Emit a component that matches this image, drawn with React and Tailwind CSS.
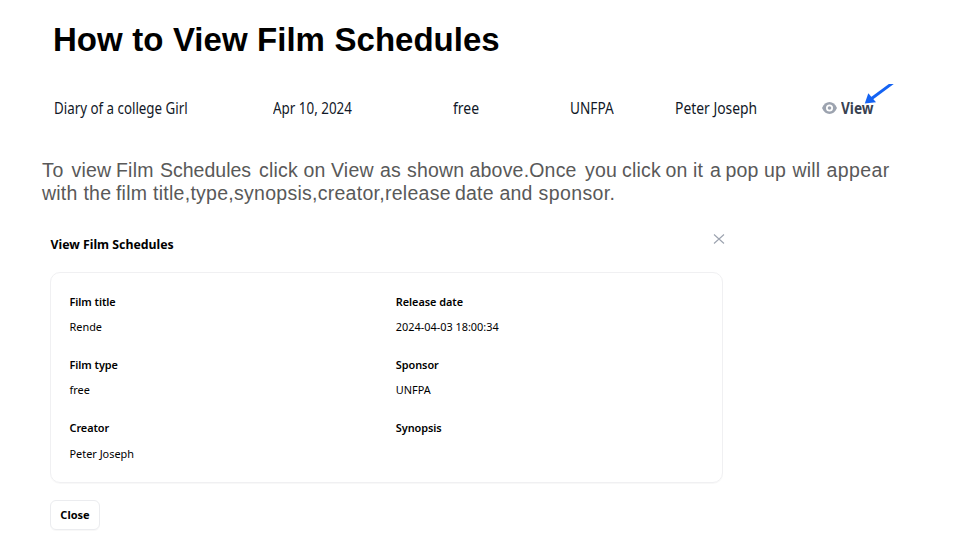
import React from "react";

const cell = "inline-block origin-left whitespace-nowrap";

function Field({ label, value }) {
  return (
    <div className="h-[63.4px]">
      <div className="h-[25.2px] font-semibold leading-[18px] tracking-[-0.05px]">{label}</div>
      <div className="leading-[18px]">{value}</div>
    </div>
  );
}

export default function App() {
  return (
    <div className="flex h-[540px] w-[960px] flex-col overflow-hidden bg-white font-['Noto_Sans',sans-serif] text-black">
      <h1 className="mt-[20px] ml-[53px] h-[40px] font-['Liberation_Sans',sans-serif] text-[33px] leading-[40px] font-bold whitespace-nowrap [word-spacing:0.4px]">
        How to View Film Schedules
      </h1>

      <div className="mt-[23px] ml-[54px] flex h-[50px] w-[860px] items-center text-[15.5px] leading-[24px] text-[#111827]">
        <div className="w-[219px]"><span className={`${cell} scale-x-[0.86]`}>Diary of a college Girl</span></div>
        <div className="w-[180px]"><span className={`${cell} scale-x-[0.865]`}>Apr 10, 2024</span></div>
        <div className="w-[117px]"><span className={`${cell} scale-x-[0.9]`}>free</span></div>
        <div className="w-[105px]"><span className={`${cell} scale-x-[0.88]`}>UNFPA</span></div>
        <div className="w-[147px]"><span className={`${cell} scale-x-[0.895]`}>Peter Joseph</span></div>
        <div className="relative flex h-[50px] items-center text-[#374151]">
          <svg className="mr-[4px] h-[12px] w-[15px]" viewBox="0 0 15 12">
            <path d="M0 6C1.500 2.200 4.300 0 7.500 0S13.500 2.200 15 6C13.500 9.800 10.700 12 7.500 12S1.500 9.800 0 6z" fill="#9ca3af" />
            <circle cx="7.500" cy="6" r="3.500" fill="#fff" />
            <circle cx="7.500" cy="6" r="1.800" fill="#9ca3af" />
          </svg>
          <span className="inline-block origin-left scale-x-[0.88] font-bold">View</span>
          <svg className="absolute top-[1px] left-[40px] h-[24px] w-[32px]" viewBox="0 0 32 24">
            <path d="M32 -2L9 15" stroke="#1463f3" strokeWidth="2.900" />
            <path d="M2.800 19.500L6.300 9.300L14 18.300z" fill="#1463f3" />
          </svg>
        </div>
      </div>

      <p className="mt-[26px] ml-[42px] h-[46px] font-['Liberation_Sans',sans-serif] text-[19.5px] leading-[23px] tracking-[0.2px] whitespace-nowrap text-[#595959]">
        <span className="flex">
          <span className="w-[29.5px] tracking-[0.8px]">To </span>
          <span className="w-[44.5px]">view </span>
          <span className="w-[44px]">Film </span>
          <span className="w-[99px] tracking-[0px]">Schedules </span>
          <span className="w-[44.5px]">click </span>
          <span className="w-[27.5px]">on </span>
          <span className="w-[49px]">View </span>
          <span className="w-[27px]">as </span>
          <span className="w-[62.500px]">shown </span>
          <span className="w-[115.500px]">above.Once </span>
          <span className="w-[37px]">you </span>
          <span className="w-[43.500px]">click </span>
          <span className="w-[27.500px]">on </span>
          <span className="w-[17px]">it </span>
          <span className="w-[15.500px]">a </span>
          <span className="w-[38.500px]">pop </span>
          <span className="w-[28.500px]">up </span>
          <span className="w-[34px]">will </span>
          <span className="tracking-[0.4px]">appear </span>
        </span>
        <span className="flex">
          <span className="w-[41.500px]">with </span>
          <span className="w-[32.500px]">the </span>
          <span className="w-[37px]">film </span>
          <span className="w-[302px] tracking-[0.27px]">title,type,synopsis,creator,release </span>
          <span className="w-[44.500px]">date </span>
          <span className="w-[39px]">and </span>
          <span className="tracking-[0.4px]">sponsor.</span>
        </span>
      </p>

      <div className="mt-[28px] ml-[50px] flex h-[39px] w-[675px] justify-between">
        <h2 className="mt-[3px] ml-[0.5px] text-[12.3px] leading-[18px] font-bold">View Film Schedules</h2>
        <svg className="h-[12px] w-[12px]" viewBox="0 0 12 12" fill="none" stroke="#9ca3af" strokeWidth="1.100">
          <path d="M1 1.500L11 10.500M11 1.500L1 10.500" />
        </svg>
      </div>

      <div className="ml-[50px] h-[211px] w-[673px] shrink-0 rounded-[10px] border border-[#f0f0f2] pt-[19.6px] pl-[18.500px] text-[10.9px] shadow-[0_1px_1px_rgba(0,0,0,0.03)]">
        <div className="grid grid-cols-[326.3px_1fr]">
          <Field label="Film title" value="Rende" />
          <Field label="Release date" value="2024-04-03 18:00:34" />
          <Field label="Film type" value="free" />
          <Field label="Sponsor" value="UNFPA" />
          <Field label="Creator" value="Peter Joseph" />
          <Field label="Synopsis" value="" />
        </div>
      </div>

      <button className="mt-[17px] ml-[50px] h-[30px] w-[50px] shrink-0 rounded-[6px] border border-[#ebecef] text-[11px] font-bold shadow-[0_1px_1px_rgba(0,0,0,0.03)]">
        Close
      </button>
    </div>
  );
}
